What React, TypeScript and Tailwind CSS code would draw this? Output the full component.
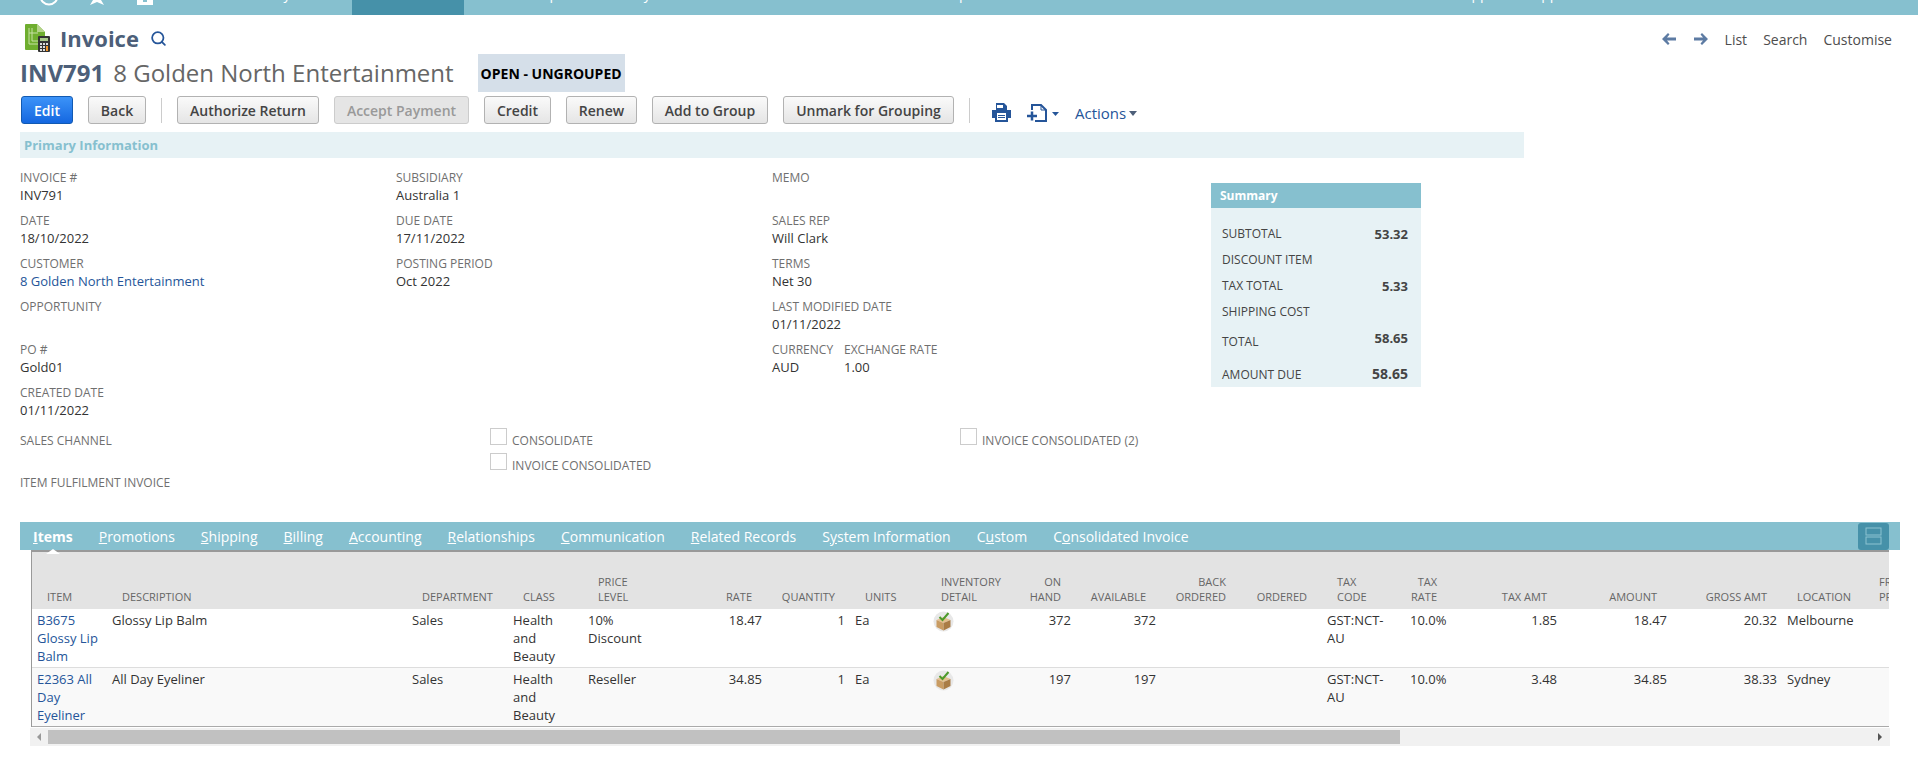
import { Search } from "lucide-react"

const navItems = [
  { label: "Activity", className: "w-[108px]" },
  { label: "Transactions", className: "w-[112px] bg-[#4691a9] pl-[14px]" },
  { label: "Lists", className: "w-[69px] pl-[16px]" },
  { label: "Reports", className: "w-[82px]" },
  { label: "Analytics", className: "w-[85px]" },
  { label: "Documents", className: "w-[230px]" },
  { label: "Setup", className: "w-[500px]" },
  { label: "SuiteApps", className: "w-[95px]" },
  { label: "Support", className: "w-[90px]" },
]

const buttons = [
  { label: "Authorize Return", className: "w-[142px] ml-[15px]" },
  { label: "Accept Payment", className: "w-[135px] ml-[15px]", disabled: true },
  { label: "Credit", className: "w-[67px] ml-[15px]" },
  { label: "Renew", className: "w-[71px] ml-[15px]" },
  { label: "Add to Group", className: "w-[116px] ml-[15px]" },
  { label: "Unmark for Grouping", className: "w-[171px] ml-[15px]" },
]

const columnOne = [
  { label: "INVOICE #", value: "INV791" },
  { label: "DATE", value: "18/10/2022" },
  { label: "CUSTOMER", value: "8 Golden North Entertainment", link: true },
  { label: "OPPORTUNITY", value: "" },
  { label: "PO #", value: "Gold01" },
  { label: "CREATED DATE", value: "01/11/2022" },
]

const columnTwo = [
  { label: "SUBSIDIARY", value: "Australia 1" },
  { label: "DUE DATE", value: "17/11/2022" },
  { label: "POSTING PERIOD", value: "Oct 2022" },
]

const columnThree = [
  { label: "MEMO", value: "" },
  { label: "SALES REP", value: "Will Clark" },
  { label: "TERMS", value: "Net 30" },
  { label: "LAST MODIFIED DATE", value: "01/11/2022" },
]

const tabs = [
  ["P", "romotions"],
  ["S", "hipping"],
  ["B", "illing"],
  ["A", "ccounting"],
  ["R", "elationships"],
  ["C", "ommunication"],
]

const columns = [
  { w: "w-[75px]", head: ["ITEM"] },
  { w: "w-[300px]", head: ["DESCRIPTION"] },
  { w: "w-[101px]", head: ["DEPARTMENT"] },
  { w: "w-[75px]", head: ["CLASS"] },
  { w: "w-[94px]", head: ["PRICE", "LEVEL"] },
  { w: "w-[90px]", head: ["RATE"], right: true },
  { w: "w-[83px]", head: ["QUANTITY"], right: true },
  { w: "w-[78px]", head: ["UNITS"] },
  { w: "w-[87px]", head: ["INVENTORY", "DETAIL"], left: "pl-[13px]" },
  { w: "w-[61px]", head: ["ON", "HAND"], right: true },
  { w: "w-[85px]", head: ["AVAILABLE"], right: true },
  { w: "w-[80px]", head: ["BACK", "ORDERED"], right: true },
  { w: "w-[81px]", head: ["ORDERED"], right: true },
  { w: "w-[83px]", head: ["TAX", "CODE"] },
  { w: "w-[47px]", head: ["TAX", "RATE"], right: true, nowrap: true },
  { w: "w-[110px]", head: ["TAX AMT"], right: true },
  { w: "w-[110px]", head: ["AMOUNT"], right: true },
  { w: "w-[110px]", head: ["GROSS AMT"], right: true },
  { w: "w-[82px]", head: ["LOCATION"] },
  { w: "w-[100px]", head: ["FRONT", "PRICE"] },
]

const rows = [
  ["B3675 Glossy Lip Balm", "Glossy Lip Balm", "Sales", "Health and Beauty", "10% Discount", "18.47", "1", "Ea", "", "372", "372", "", "", "GST:NCT-AU", "10.0%", "1.85", "18.47", "20.32", "Melbourne", ""],
  ["E2363 All Day Eyeliner", "All Day Eyeliner", "Sales", "Health and Beauty", "Reseller", "34.85", "1", "Ea", "", "197", "197", "", "", "GST:NCT-AU", "10.0%", "3.48", "34.85", "38.33", "Sydney", ""],
]

function Field({ label, value, link }: { label: string; value: string; link?: boolean }) {
  return (
    <div className="h-[43px]">
      <div className="text-[12px] leading-[18px] text-[#6f6f6f]">{label}</div>
      <div className={`-mt-px text-[13px] leading-[18px] ${link ? "text-[#255599]" : "text-[#333]"}`}>{value}</div>
    </div>
  )
}

function Checkbox({ label }: { label: string }) {
  return (
    <div className="flex h-[25px]">
      <div className="w-[17px] h-[17px] border border-[#ccc] bg-white" />
      <div className="ml-[5px] pt-[4px] text-[12px] leading-[18px] text-[#6f6f6f]">{label}</div>
    </div>
  )
}

function InvoiceIcon() {
  return (
    <svg width="26" height="29" viewBox="0 0 26 29" className="shrink-0">
      <path d="M0 1a1 1 0 0 1 1-1h11l8 8v18H1a1 1 0 0 1-1-1z" fill="#6fae2f" />
      <path d="M12 0l8 8h-8z" fill="#b5d48a" />
      <path d="M4 4v16h9M7 4v13h7M4 9h9" stroke="#c7e0a5" strokeWidth="1" fill="none" />
      <rect x="13" y="12" width="12" height="16" rx="1" fill="#333" />
      <rect x="15" y="14" width="8" height="3" fill="#a9c98a" />
      <path d="M15 19h2v2h-2zM18 19h2v2h-2zM21 19h2v2h-2zM15 22h2v2h-2zM18 22h2v2h-2zM15 25h2v2h-2zM18 25h2v2h-2z" fill="#ddd" />
      <rect x="21" y="22" width="2" height="5" fill="#f0962a" />
    </svg>
  )
}

function BoxIcon() {
  return (
    <svg width="21" height="21" viewBox="0 0 21 21" className="block">
      <circle cx="10.5" cy="10.5" r="10" fill="#e8e8e8" />
      <path d="M3.500 9l7-3 7 3-7 3z" fill="#e3c08e" />
      <path d="M3.500 9l7 3v7.500l-7-3.500z" fill="#c99c63" />
      <path d="M10.500 12v7.500l7-3.500V9z" fill="#a97c46" />
      <path d="M6.500 6l3 3L15.500 2" stroke="#4c9a2a" strokeWidth="2" fill="none" />
    </svg>
  )
}

export default function App() {
  return (
    <div className="w-[1918px] h-[765px] overflow-hidden bg-white font-['Open_Sans',sans-serif] text-[13px] text-[#333]">
      {/* top nav, mostly scrolled off */}
      <div className="flex h-[15px] overflow-hidden bg-[#86c0cf] text-[14px] leading-[20px] text-white">
        <svg width="244" height="15" viewBox="0 0 244 15" className="shrink-0">
          <circle cx="49" cy="-4" r="8.500" stroke="white" strokeWidth="2" fill="none" />
          <path d="M93 0l-3 5 7-3 7 3-3-5z" fill="white" />
          <path d="M137 0h16v5h-16z" fill="white" />
          <path d="M143 0h4v2h-4z" fill="#86c0cf" />
        </svg>
        {navItems.map((item) => (
          <div key={item.label} className={`shrink-0 h-[15px] ${item.className}`}>
            <div className="-mt-[16px]">{item.label}</div>
          </div>
        ))}
      </div>

      {/* record header */}
      <div className="flex items-start justify-between pl-[25px] pr-[26px] pt-[9px] h-[39px]">
        <div className="flex items-center h-[28px]">
          <InvoiceIcon />
          <span className="ml-[9px] text-[22px] font-bold leading-[28px] text-[#4d5f79]">Invoice</span>
          <Search className="ml-[11px] w-[17px] h-[17px] text-[#255599]" strokeWidth={2.5} />
        </div>
        <div className="flex items-center h-[30px] text-[14px] text-[#4d4d4d]">
          <svg width="14" height="12" viewBox="0 0 14 12" fill="#5d7ba3">
            <path d="M6 0l1.500 1.500L5 4.500h9v3H5l2.500 3L6 12 0 6z" />
          </svg>
          <svg width="14" height="12" viewBox="0 0 14 12" fill="#5d7ba3" className="ml-[18px]">
            <path d="M8 0L6.500 1.500l2.500 3H0v3h9l-2.500 3L8 12l6-6z" />
          </svg>
          <span className="ml-[17px]">List</span>
          <span className="ml-[16px]">Search</span>
          <span className="ml-[16px]">Customise</span>
        </div>
      </div>

      <div className="flex items-center pl-[20px] h-[38px]">
        <span className="text-[24px] font-bold text-[#4d5f79]">INV791</span>
        <span className="ml-[9px] text-[24px] text-[#666]">8 Golden North Entertainment</span>
        <span className="ml-[24px] flex items-center justify-center w-[147px] h-[38px] bg-[#d5dfe9] text-[14px] font-bold text-black">OPEN - UNGROUPED</span>
      </div>

      {/* buttons */}
      <div className="flex items-center pl-[21px] mt-[4px] h-[28px]">
        <button className="w-[52px] h-[28px] rounded-[3px] border border-[#125ab2] bg-gradient-to-b from-[#3c93f8] to-[#1467e0] text-[14px] font-semibold text-white">Edit</button>
        <button className="w-[58px] h-[28px] ml-[15px] rounded-[3px] border border-[#b2b2b2] bg-gradient-to-b from-[#fafafa] to-[#e5e5e5] text-[14px] font-semibold text-[#444]">Back</button>
        <div className="w-px h-[25px] ml-[15px] bg-[#ccc]" />
        {buttons.map((b) => (
          <button
            key={b.label}
            className={`h-[28px] rounded-[3px] border text-[14px] font-semibold ${b.className} ${
              b.disabled ? "border-[#ccc] bg-[#e5e5e5] text-[#999]" : "border-[#b2b2b2] bg-gradient-to-b from-[#fafafa] to-[#e5e5e5] text-[#444]"
            }`}
          >
            {b.label}
          </button>
        ))}
        <div className="w-px h-[25px] ml-[15px] bg-[#ccc]" />
        <svg width="19" height="19" viewBox="0 0 19 19" fill="#255599" className="ml-[22px] mt-[5px]">
          <path d="M4 0h8l3 3v4H4z" />
          <path d="M0 7h19v8h-3v4H3v-4H0z" />
          <path d="M5 2h6v3H5z" fill="white" />
          <path d="M5 10h9v7H5z" fill="white" />
          <path d="M6 12h7v1H6zM6 14h7v1H6z" fill="#255599" />
        </svg>
        <svg width="32" height="18" viewBox="0 0 32 18" fill="none" className="ml-[16px] mt-[5px]">
          <path d="M5 6V1h9l5 5v11H8" stroke="#255599" strokeWidth="2" />
          <path d="M14 1v5h5" stroke="#255599" strokeWidth="1" />
          <path d="M0 12h10M5 7.500v9" stroke="#255599" strokeWidth="2.500" />
          <path d="M25 8h7l-3.500 4z" fill="#255599" />
        </svg>
        <span className="ml-[16px] mt-[6px] text-[15px] text-[#255599]">Actions</span>
        <svg width="8" height="5" viewBox="0 0 8 5" fill="#4d5f79" className="ml-[3px] mt-[6px]">
          <path d="M0 0h8L4 5z" />
        </svg>
      </div>

      {/* primary information */}
      <div className="ml-[20px] mt-[8px] w-[1504px] h-[26px] bg-[#e7f2f5] pl-[4px] text-[13px] font-bold leading-[26px] text-[#86c0cf]">Primary Information</div>

      <div className="grid grid-cols-[376px_376px_439px_210px] pl-[20px] pt-[11px] h-[270px]">
        <div>
          {columnOne.map((f) => (
            <Field key={f.label} {...f} />
          ))}
        </div>
        <div>
          {columnTwo.map((f) => (
            <Field key={f.label} {...f} />
          ))}
        </div>
        <div>
          {columnThree.map((f) => (
            <Field key={f.label} {...f} />
          ))}
          <div className="flex">
            <div className="w-[72px]">
              <Field label="CURRENCY" value="AUD" />
            </div>
            <Field label="EXCHANGE RATE" value="1.00" />
          </div>
        </div>
        <div className="mt-[14px] h-[204px] bg-[#e7f2f5] text-[12px] text-[#444]">
          <div className="h-[25px] bg-[#86c0cf] pl-[9px] text-[12px] font-bold leading-[25px] text-white">Summary</div>
          <div className="pl-[11px] pr-[13px] pt-[13px]">
            <div className="flex items-center justify-between h-[26px]">
              <span>SUBTOTAL</span>
              <span className="pt-[2px] text-[13px] font-bold">53.32</span>
            </div>
            <div className="flex items-center h-[26px]">DISCOUNT ITEM</div>
            <div className="flex items-center justify-between h-[26px]">
              <span>TAX TOTAL</span>
              <span className="pt-[2px] text-[13px] font-bold">5.33</span>
            </div>
            <div className="flex items-center h-[26px]">SHIPPING COST</div>
            <div className="flex items-center justify-between h-[26px] mt-[4px]">
              <span>TOTAL</span>
              <span className="pb-[6px] text-[13px] font-bold">58.65</span>
            </div>
            <div className="flex items-end justify-between h-[32px] pb-[3px]">
              <span>AMOUNT DUE</span>
              <span className="text-[14px] font-bold">58.65</span>
            </div>
          </div>
        </div>
      </div>

      <div className="grid grid-cols-[470px_470px_1fr] pl-[20px] h-[94px]">
        <div className="pt-[4px] text-[12px] leading-[18px] text-[#6f6f6f]">
          <div className="h-[42px]">SALES CHANNEL</div>
          <div>ITEM FULFILMENT INVOICE</div>
        </div>
        <div>
          <Checkbox label="CONSOLIDATE" />
          <Checkbox label="INVOICE CONSOLIDATED" />
        </div>
        <div>
          <Checkbox label="INVOICE CONSOLIDATED (2)" />
        </div>
      </div>

      {/* subtabs */}
      <div className="relative flex items-center justify-between ml-[20px] w-[1880px] h-[28px] bg-[#86c0cf] pl-[13px] pr-[11px] text-[14px] text-white">
        <div className="flex gap-[26px]">
          <span className="relative font-bold">
            <u>I</u>tems
            <span className="absolute left-[13px] top-[23px] w-0 h-0 border-x-[7px] border-b-[5px] border-x-transparent border-b-white" />
          </span>
          {tabs.map(([a, b]) => (
            <span key={a}>
              <u>{a}</u>
              {b}
            </span>
          ))}
          <span>
            <u>R</u>elated Records
          </span>
          <span>
            S<u>y</u>stem Information
          </span>
          <span>
            C<u>u</u>stom
          </span>
          <span>
            C<u>o</u>nsolidated Invoice
          </span>
        </div>
        <div className="flex items-center justify-center w-[31px] h-[27px] rounded-[3px] bg-[#4691a9]">
          <svg width="17" height="18" viewBox="0 0 17 18" fill="none" stroke="#8cc3d1" strokeWidth="1">
            <rect x="1" y="1" width="15" height="7" />
            <rect x="1" y="10" width="15" height="7" />
          </svg>
        </div>
      </div>

      {/* items table */}
      <div className="ml-[31px] w-[1858px] overflow-hidden border-l border-[#999]">
        <table className="table-fixed w-[1932px] border-collapse border-t-2 border-t-[#999]">
          <colgroup>
            {columns.map((c, i) => (
              <col key={i} className={c.w} />
            ))}
          </colgroup>
          <thead>
            <tr className="h-[58px] bg-[#e3e3e3]">
              {columns.map((c, i) => (
                <th
                  key={i}
                  className={`align-bottom pb-[5px] text-[11px] font-normal leading-[15px] text-[#666] whitespace-nowrap ${
                    c.right ? "text-right pr-[15px]" : `text-left ${c.left ?? "pl-[15px]"}`
                  }`}
                >
                  {c.head.map((h) => (
                    <div key={h}>{h}</div>
                  ))}
                </th>
              ))}
            </tr>
          </thead>
          <tbody>
            {rows.map((row, r) => (
              <tr key={r} className={`border-b ${r === 0 ? "h-[58px] bg-white border-[#ddd]" : "h-[59px] bg-[#f9f9f9] border-[#aaa]"}`}>
                {row.map((cell, i) => (
                  <td
                    key={i}
                    className={`align-top pt-[2px] pl-[5px] text-[13px] leading-[18px] break-words ${i === 4 ? "pr-[20px]" : "pr-[5px]"} ${
                      columns[i].right && i !== 14 ? "text-right" : "text-left"
                    } ${i === 0 ? "text-[#255599]" : "text-[#333]"}`}
                  >
                    {i === 8 ? <BoxIcon /> : cell}
                  </td>
                ))}
              </tr>
            ))}
          </tbody>
        </table>
      </div>

      {/* horizontal scrollbar */}
      <div className="flex items-center ml-[30px] mt-[1px] w-[1860px] h-[18px] bg-[#f1f1f1]">
        <div className="flex justify-center w-[18px]">
          <div className="w-0 h-0 border-y-[4px] border-r-[4px] border-y-transparent border-r-[#999]" />
        </div>
        <div className="h-[14px] w-[1352px] bg-[#c1c1c1]" />
        <div className="flex justify-end flex-1 pr-[8px]">
          <div className="w-0 h-0 border-y-[4px] border-l-[4px] border-y-transparent border-l-[#555]" />
        </div>
      </div>
    </div>
  )
}
